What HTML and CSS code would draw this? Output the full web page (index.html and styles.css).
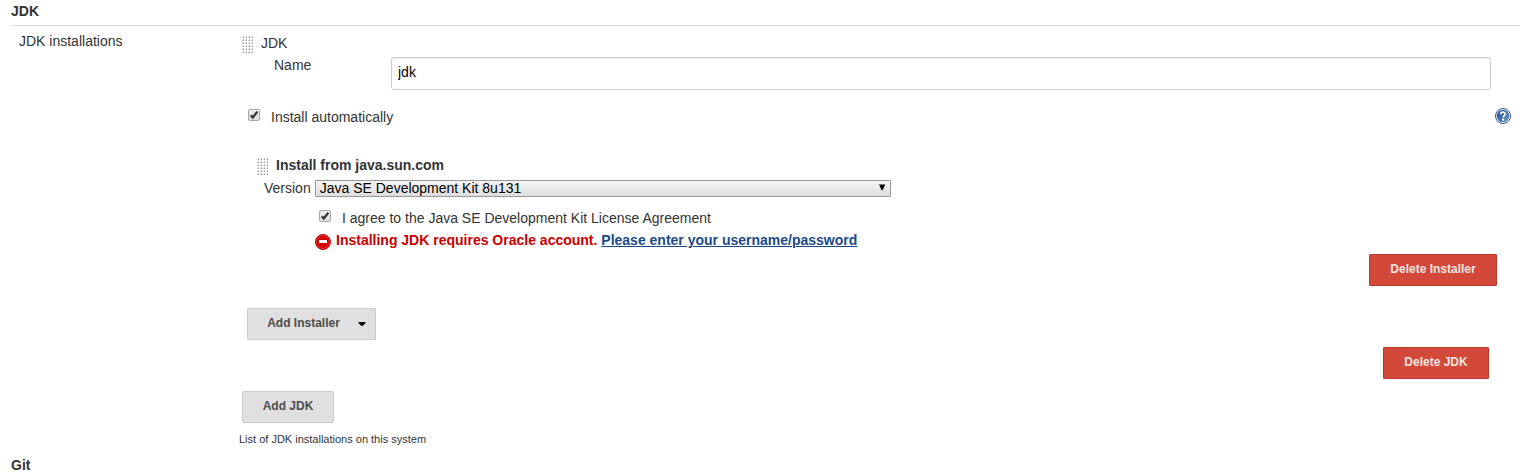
FILE: index.html
```html
<!DOCTYPE html>
<html lang="en">
<head>
<meta charset="utf-8">
<title>JDK configuration</title>
<link rel="stylesheet" href="styles.css">
</head>
<body>
<svg class="defs" width="0" height="0" aria-hidden="true">
  <defs>
    <pattern id="dots" width="3" height="3" patternUnits="userSpaceOnUse">
      <path d="M1 0h1v1h-1z" fill="#c4c4be"/><path d="M0 1h1v1h-1z" fill="#d0d0ca"/><path d="M1 1h1v1h-1z" fill="#a4a49e"/>
    </pattern>
    <linearGradient id="boxfill" x1="0" y1="0" x2="0" y2="1"><stop offset="0" stop-color="#f0f0f0"/><stop offset="1" stop-color="#dcdcdc"/></linearGradient>
    <linearGradient id="helpfill" x1="0" y1="0" x2="1" y2="1"><stop offset="0" stop-color="#2a5596"/><stop offset=".45" stop-color="#3f6ba8"/><stop offset="1" stop-color="#7b9fce"/></linearGradient>
    <symbol id="check" viewBox="0 0 12 12">
      <rect x=".5" y=".5" width="11" height="11" rx="1.5" fill="url(#boxfill)" stroke="#a8a8a8"/>
      <path d="M2.8 6.2l2 2.3L9.4 2.6" fill="none" stroke="#333" stroke-width="2.3"/>
    </symbol>
  </defs>
</svg>
<h2 class="section-title">JDK</h2>
<main class="section">
  <div class="section-label">JDK installations</div>
  <div class="content">
    <div class="row jdk-head"><svg class="grip" width="12" height="17"><rect width="12" height="17" fill="url(#dots)"/></svg><span>JDK</span></div>
    <div class="name-row"><label for="name">Name</label><input id="name" class="text-input" type="text" value="jdk"></div>
    <div class="row auto-row">
      <svg class="check" width="12" height="12"><use href="#check"/></svg><span>Install automatically</span>
      <svg class="help" width="16" height="16" viewBox="0 0 16 16"><circle cx="8" cy="8" r="7.5" fill="#fff" stroke="#2f5a94"/><circle cx="8" cy="8" r="6.3" fill="url(#helpfill)"/><path d="M5.7 6.2C5.7 3.5 10.3 3.5 10.3 6c0 1.6-2.2 1.7-2.2 3.6" fill="none" stroke="#fff" stroke-width="1.7"/><circle cx="8.1" cy="11.7" r="1.1" fill="#fff"/></svg>
    </div>
    <div class="row installer-head"><svg class="grip" width="12" height="17"><rect width="12" height="17" fill="url(#dots)"/></svg><b>Install from java.sun.com</b></div>
    <div class="row version-row"><span>Version</span><div class="select"><span>Java SE Development Kit 8u131</span><svg width="8" height="7"><path d="M1 .5h6.2L4.6 6.3h-1z" fill="#000"/></svg></div></div>
    <div class="row agree-row"><svg class="check" width="12" height="12"><use href="#check"/></svg><span>I agree to the Java SE Development Kit License Agreement</span></div>
    <div class="row error-row"><svg class="stop" width="16" height="16" viewBox="0 0 16 16"><circle cx="8" cy="8" r="7.5" fill="#d40000" stroke="#b50000"/><circle cx="8" cy="8" r="6.5" fill="none" stroke="#e65050" stroke-width=".7"/><path d="M4 6h8v3H4z" fill="#fff"/></svg><b>Installing JDK requires Oracle account. <a href="#">Please enter your username/password</a></b></div>
    <button class="btn danger delete-installer">Delete Installer</button>
    <button class="btn add-installer">Add Installer<svg width="8" height="5"><path d="M.5 0h7v1L4.5 4h-1L.5 1z" fill="#000"/></svg></button>
    <button class="btn danger delete-jdk">Delete JDK</button>
    <button class="btn add-jdk">Add JDK</button>
    <div class="hint">List of JDK installations on this system</div>
  </div>
</main>
<h2 class="section-title next">Git</h2>
</body>
</html>
```

FILE: styles.css
```css
* { box-sizing: border-box; }
body { margin: 0; padding: 1px 6px 0 11px; height: 475px; overflow: hidden; background: #fff; color: #333; font: 14px/20px "Liberation Sans", Arial, sans-serif; }
svg { display: block; flex: none; }
.defs { position: absolute; }
.section-title { margin: 0; height: 25px; border-bottom: 1px solid #ddd; font-size: 14px; line-height: 20px; }
.section-title.next { border: 0; height: 20px; }
.section { display: flex; height: 429px; }
.section-label { width: 228px; padding: 5px 0 0 8px; }
.content { flex: 1; display: flex; flex-direction: column; padding-top: 7px; }
.row { display: flex; height: 20px; white-space: nowrap; }
.grip { margin-top: 3px; margin-right: 7px; }
.jdk-head { padding-left: 3px; }
.name-row { display: flex; padding-left: 35px; margin-top: 4px; }
.name-row label { width: 117px; line-height: 16px; }
.text-input { width: 1100px; height: 33px; padding: 0 6px 3px; border: 1px solid #ccc; border-radius: 3px; box-shadow: inset 0 1px 1px rgba(0,0,0,.08); color: #000; font: inherit; outline: none; }
.auto-row { margin-top: 17px; padding-left: 9px; }
.check { margin: 2px 11px 0 0; }
.help { margin: 1px 9px 0 auto; }
.installer-head { margin-top: 28px; padding-left: 18px; }
.version-row { margin-top: 3px; padding-left: 25px; }
.select { display: flex; justify-content: space-between; width: 576px; height: 17px; margin: 2px 0 0 4px; padding: 0 4px; border: 1px solid #999; border-radius: 1px; background: linear-gradient(#f6f6f6, #dedede); color: #000; line-height: 15px; }
.select svg { margin-top: 3px; }
.agree-row { margin-top: 10px; padding-left: 80px; }
.error-row { margin-top: 2px; padding-left: 76px; color: #c00; }
.stop { margin: 4px 5px 0 0; }
.error-row a { color: #204a87; }
.btn { display: flex; align-items: center; justify-content: center; height: 32px; padding: 0 0 2px; border: 1px solid #ccc; border-radius: 1px; background: #e0e0e0; color: #4d4d4d; font: bold 12px/16px "Liberation Sans", Arial, sans-serif; white-space: nowrap; }
.danger { align-self: flex-end; border-color: #b93a2c; background: #d24939; color: #f2e4e2; }
.delete-installer { width: 128px; margin: 4px 23px 0 0; }
.add-installer { width: 129px; margin: 22px 0 0 8px; }
.add-installer svg { margin: 2px -10px 0 18px; }
.delete-jdk { width: 106px; margin: 7px 31px 0 0; }
.add-jdk { width: 92px; margin: 12px 0 0 3px; }
.hint { margin-top: 8px; font-size: 11px; line-height: 16px; }
```
